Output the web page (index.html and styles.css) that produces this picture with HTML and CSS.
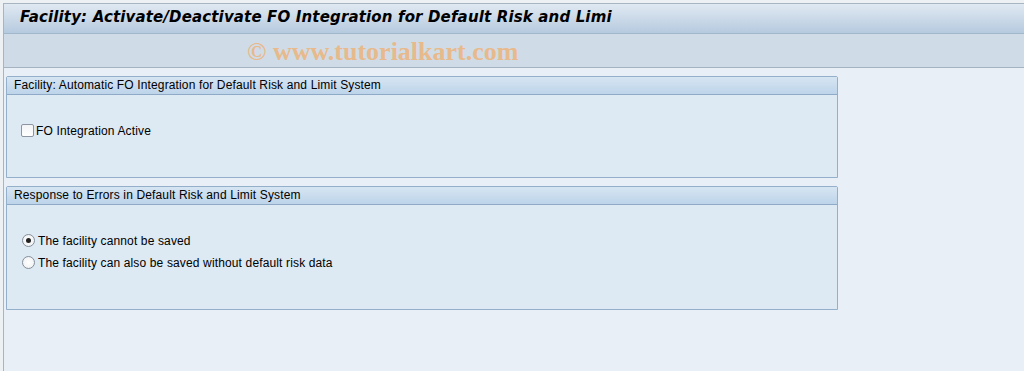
FILE: index.html
```html
<!DOCTYPE html>
<html lang="en">
  <head>
    <meta charset="UTF-8" />
    <title>Facility: Activate/Deactivate FO Integration</title>
    <link rel="stylesheet" href="styles.css">
  </head>
  <body>
    <div class="window">
      <div class="titlebar">
        <h1>Facility: Activate/Deactivate FO Integration for Default Risk and Limi</h1>
      </div>
      <div class="toolbar">
        <span class="mark">&copy; www.tutorialkart.com</span>
      </div>

      <div class="content">
        <div class="group">
          <div class="group-head">Facility: Automatic FO Integration for Default Risk and Limit System</div>
          <div class="group-body first">
            <label class="row">
              <span class="check"></span>FO Integration Active
            </label>
          </div>
        </div>

        <div class="group">
          <div class="group-head">Response to Errors in Default Risk and Limit System</div>
          <div class="group-body second">
            <label class="row">
              <span class="radio on"></span>The facility cannot be saved
            </label>
            <label class="row">
              <span class="radio"></span>The facility can also be saved without default risk data
            </label>
          </div>
        </div>
      </div>
    </div>
  </body>
</html>
```

FILE: styles.css
```css
* {
  margin: 0;
  padding: 0;
  box-sizing: border-box;
}

body {
  background: #eef1f4;
  padding: 3px 0 0 3px;
  height: 371px;
  overflow: hidden;
  font-family: "DejaVu Sans", Verdana, sans-serif;
}

.window {
  border-left: 1px solid #a8b4c0;
  border-top: 1px solid #a8b4c0;
  height: 100%;
  background: #e8eff7;
}

.titlebar {
  height: 30px;
  background: linear-gradient(#e0e9f2, #b6cadf);
  border-bottom: 1px solid #a3b7cb;
  padding: 4px 0 0 16px;
}
.titlebar h1 {
  font-size: 15px;
  font-weight: bold;
  font-style: italic;
  letter-spacing: 0.15px;
  color: #000;
  white-space: nowrap;
}

.toolbar {
  height: 34px;
  background: #cfdce7;
  border-bottom: 1px solid #a5b3c1;
  padding-left: 243px;
  padding-top: 3px;
}
.mark {
  font-family: "Liberation Serif", "Times New Roman", serif;
  font-weight: bold;
  font-size: 26px;
  color: #e8b98b;
}

.content {
  padding: 8px 0 0 2px;
}

.group {
  width: 832px;
  margin-bottom: 8px;
  border: 1px solid #93afca;
  border-radius: 2px 2px 0 0;
  background: #dde9f3;
}
.group-head {
  height: 18px;
  background: linear-gradient(#d7e5f2, #bdd4ea);
  border-bottom: 1px solid #8eaac6;
  font-family: "Liberation Sans", Tahoma, sans-serif;
  font-size: 12px;
  letter-spacing: 0.14px;
  color: #000;
  padding: 1px 0 0 7px;
}
.group-body {
  font-family: "Liberation Sans", Tahoma, sans-serif;
  font-size: 12px;
  letter-spacing: 0.14px;
  color: #000;
  display: flex;
  flex-direction: column;
}
.group-body.first {
  height: 82px;
  padding: 29px 0 0 14px;
}
.group-body.second {
  height: 104px;
  padding: 29px 0 0 15px;
  gap: 9px;
}

.row {
  display: flex;
  align-items: center;
  height: 13px;
}

.check {
  width: 13px;
  height: 13px;
  border: 1px solid #8b96a2;
  border-radius: 2px;
  background: linear-gradient(#f2f4f6, #ffffff);
  margin-right: 2px;
}

.radio {
  width: 13px;
  height: 13px;
  border: 1px solid #858f9a;
  border-radius: 50%;
  background: radial-gradient(#ffffff, #eceef0);
  margin-right: 3px;
  display: flex;
  align-items: center;
  justify-content: center;
}
.radio.on::after {
  content: "";
  width: 5px;
  height: 5px;
  border-radius: 50%;
  background: #222;
}
```
